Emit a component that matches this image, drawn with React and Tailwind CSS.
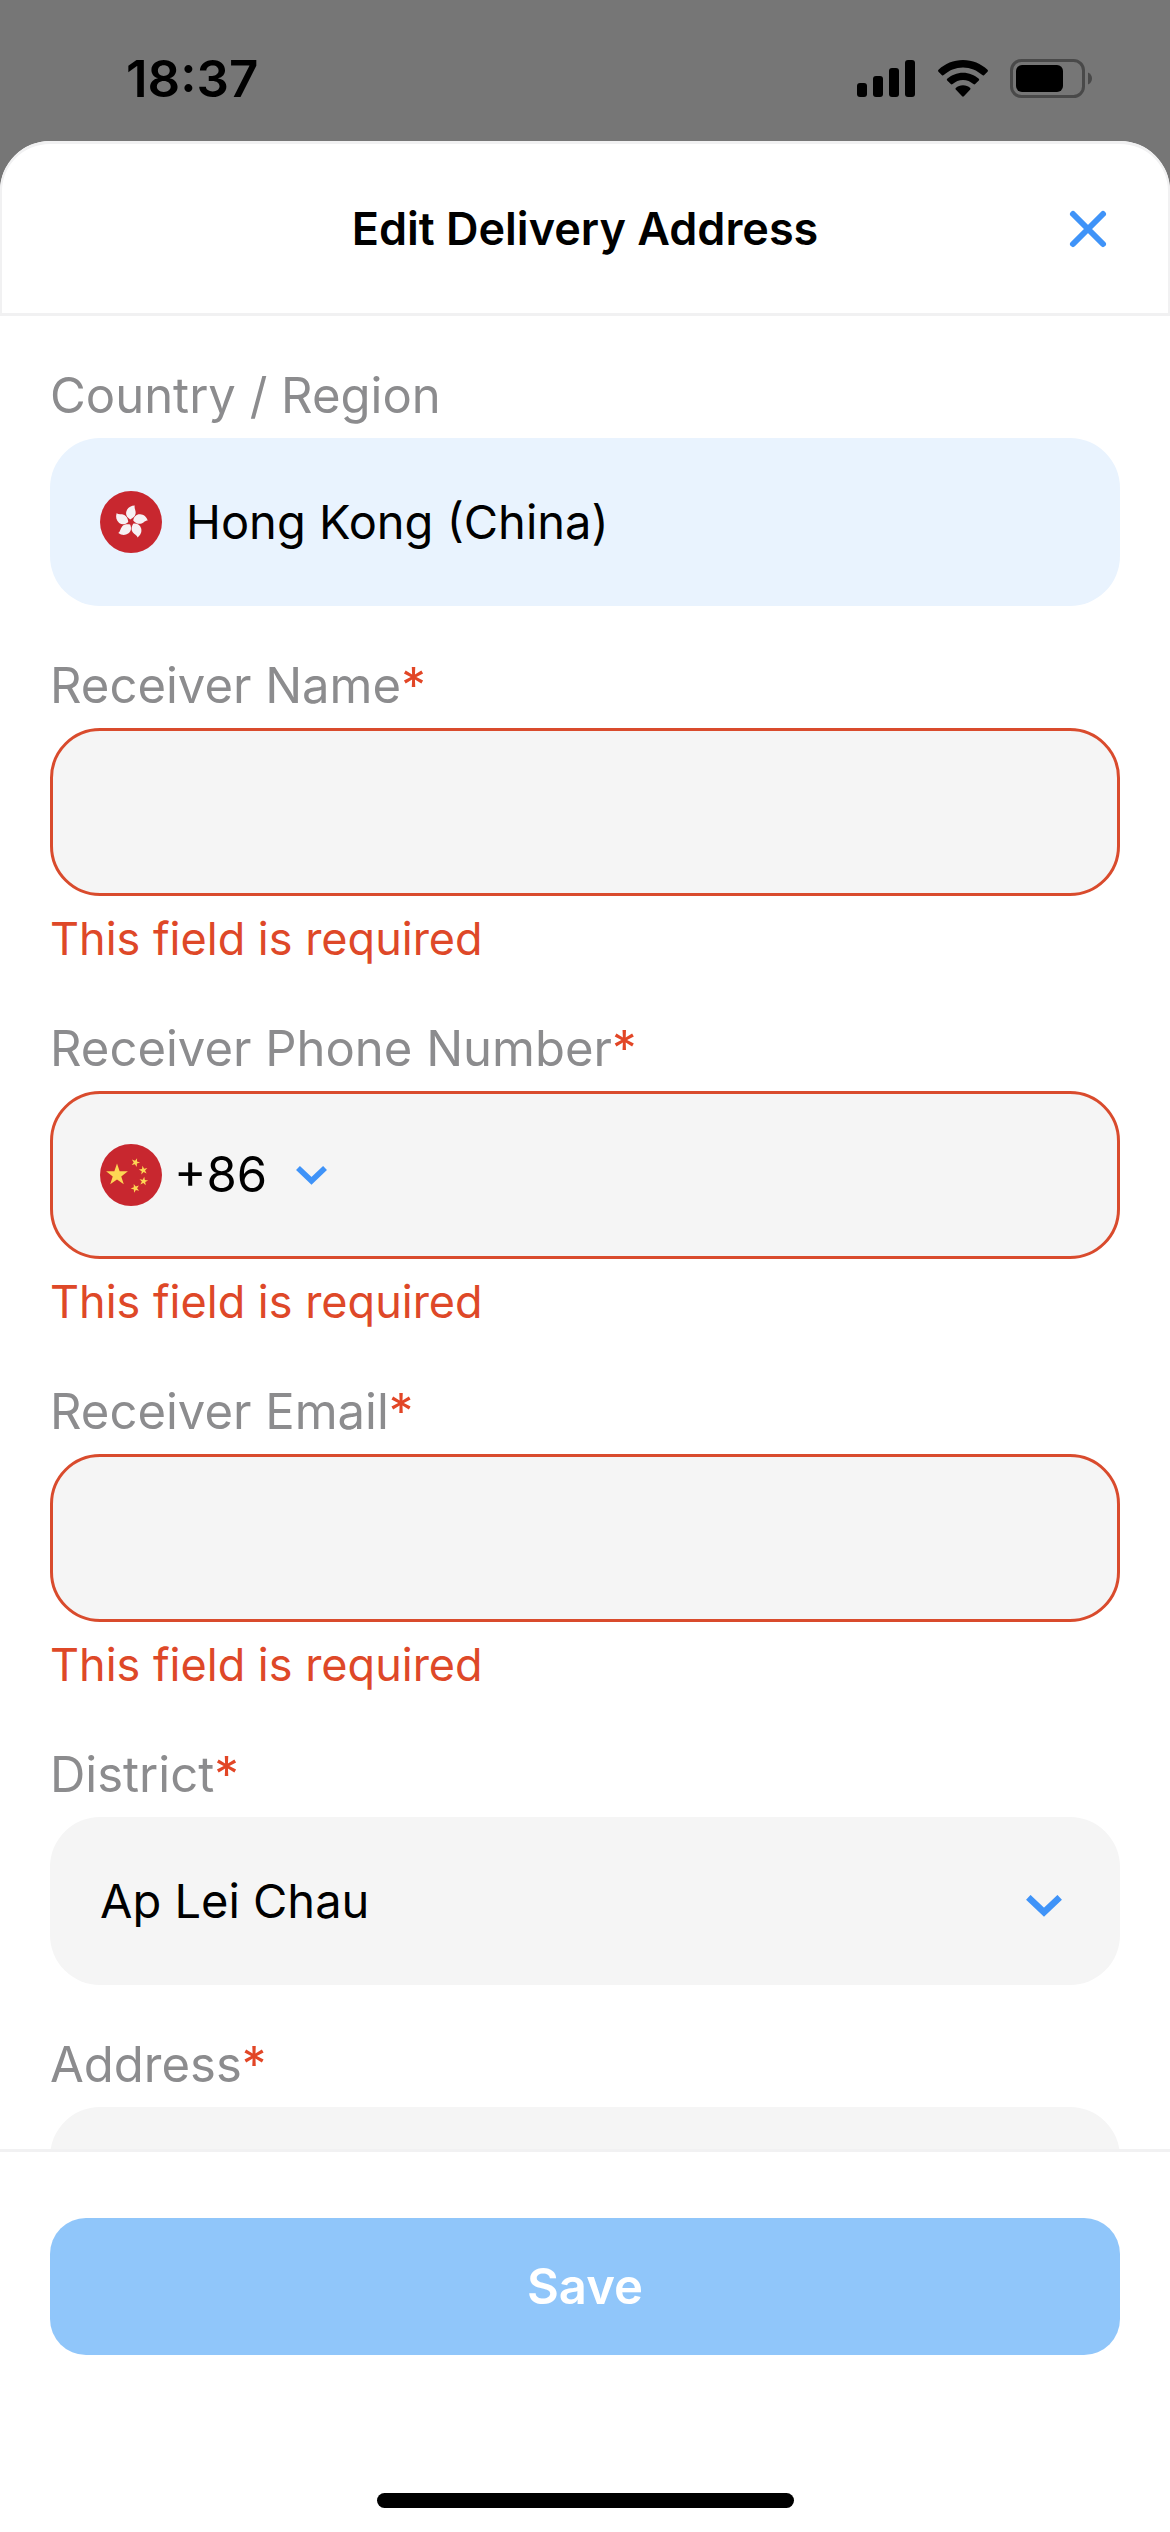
import React, { useState } from 'react';

const BOX = 'w-full h-[168px] rounded-[50px] text-[47px] text-black outline-none';

function StatusBar() {
  return (
    <div className="h-[141px] shrink-0 flex items-center justify-between pt-4 pl-[126px] pr-[77px]">
      <span className="text-[51px] leading-[60px] font-semibold">18:37</span>
      <div className="flex items-center gap-[22px]">
        <svg width="59" height="38" viewBox="0 0 59 38">
          <rect x="0" y="23" width="10" height="14" rx="3" />
          <rect x="16" y="16" width="10" height="21" rx="3" />
          <rect x="32" y="8" width="10" height="29" rx="3" />
          <rect x="48" y="0" width="10" height="37" rx="3" />
        </svg>
        <svg width="50" height="38" viewBox="0 0 50 38">
          <path d="M25 0C34.500 0 43 3.600 49.500 9.800Q50.400 10.800 49.500 11.700L46 15.200Q45.200 15.900 44.300 15.100C39 10.200 32.300 7.400 25 7.400S11 10.200 5.700 15.100Q4.800 15.900 4 15.200L.5 11.700Q-.4 10.800 .5 9.800C7 3.600 15.500 0 25 0Z" />
          <path d="M25 12.700C31 12.700 36.600 15 40.800 18.800Q41.700 19.700 40.800 20.600L37.200 24.100Q36.400 24.900 35.400 24.100C32.600 21.600 29 20 25 20S17.400 21.600 14.600 24.100Q13.600 24.900 12.800 24.100L9.200 20.600Q8.300 19.700 9.200 18.800C13.400 15 19 12.700 25 12.700Z" />
          <path d="M25 25.300C27.800 25.300 30.300 26.200 32.200 27.900Q33 28.700 32.200 29.600L25.900 36.300Q25 37.200 24.100 36.300L17.800 29.600Q17 28.700 17.800 27.900C19.700 26.200 22.200 25.300 25 25.300Z" />
        </svg>
        <svg width="83" height="39" viewBox="0 0 83 39">
          <rect x="1.500" y="1.500" width="72" height="36" rx="10" fill="none" stroke="#494949" strokeWidth="3" />
          <rect x="6" y="6" width="47" height="27" rx="6" />
          <path d="M78 13.500C80.700 14.500 82 17 82 19.500S80.700 24.500 78 25.500Z" fill="#494949" />
        </svg>
      </div>
    </div>
  );
}

function HongKongFlag() {
  return (
    <svg className="size-[62px] shrink-0" viewBox="0 0 62 62">
      <circle cx="31" cy="31" r="31" fill="#c8272f" />
      <g transform="translate(31 31)" fill="#f6f1f4">
        {[0, 72, 144, 216, 288].map((deg) => (
          <path key={deg} transform={`rotate(${deg})`} d="M-.8 -2.600C-4.200 -4.500 -5.800 -7.500 -4.500 -11C-3.200 -14.500 0 -16.300 3.800 -16.400C2.900 -13.800 5 -11.800 4.600 -8.500C4.200 -5.800 2 -3.800 -.8 -2.600Z" />
        ))}
      </g>
    </svg>
  );
}

const STAR = 'M0 -10L2.300 -3.200H9.500L3.700 1.200L5.900 8.100L0 3.900L-5.900 8.100L-3.700 1.200L-9.500 -3.200H-2.300Z';

function ChinaFlag() {
  return (
    <svg className="size-[62px] shrink-0" viewBox="0 0 62 62">
      <circle cx="31" cy="31" r="31" fill="#c8272f" />
      <g fill="#fdd654">
        <path transform="translate(17 31) scale(1.150)" d={STAR} />
        <path transform="translate(35.500 18.500) rotate(20) scale(.46)" d={STAR} />
        <path transform="translate(43.300 26.300) rotate(-10) scale(.46)" d={STAR} />
        <path transform="translate(43.600 37.300) rotate(8) scale(.46)" d={STAR} />
        <path transform="translate(35.300 44.300) rotate(-20) scale(.46)" d={STAR} />
      </g>
    </svg>
  );
}

function Chevron({ className }) {
  return (
    <svg className={className} viewBox="0 0 36 22" fill="none" stroke="#3f93f8" strokeWidth="6.500">
      <path d="M2.300 2.300L18 17.200L33.700 2.300" />
    </svg>
  );
}

function Field({ id, label, required, error, children }) {
  return (
    <div>
      <label htmlFor={id} className="block mb-3 text-[49px] leading-[60px] text-[#8c8c8e]">
        {label}
        {required && <span className="text-[#e24626]">*</span>}
      </label>
      {children}
      {error && <p className="mt-[13px] text-[45px] leading-[60px] text-[#de4828]">{error}</p>}
    </div>
  );
}

export default function App() {
  const [form, setForm] = useState({ name: '', phone: '', email: '', address: '' });
  const update = (key) => (e) => setForm({ ...form, [key]: e.target.value });

  const errorFor = (key) => (form[key] ? '' : 'This field is required');
  const borderFor = (key) => (form[key] ? 'border-transparent' : 'border-[#d94b2d]');

  return (
    <div className="h-screen flex flex-col overflow-hidden bg-[#767676] font-[Inter,sans-serif] text-black">
      <StatusBar />

      <div className="flex-1 min-h-0 flex flex-col bg-white rounded-t-[50px]">
        <header className="h-[175px] shrink-0 grid grid-cols-[1fr_auto_1fr] items-center px-[60px] rounded-t-[50px] border-x-2 border-y-3 border-[#f1f1f2]">
          <h1 className="col-start-2 text-[45px] leading-[60px] font-semibold">Edit Delivery Address</h1>
          <button type="button" aria-label="Close" className="justify-self-end">
            <svg width="40" height="40" viewBox="0 0 40 40" fill="none" stroke="#3f93f8" strokeWidth="6" strokeLinecap="round">
              <path d="M5 5L35 35M35 5L5 35" />
            </svg>
          </button>
        </header>

        <form id="address-form" className="flex-1 min-h-0 overflow-hidden flex flex-col gap-[50px] px-[50px] pt-[50px]">
          <Field id="country" label="Country / Region">
            <div className={`${BOX} flex items-center gap-6 px-[50px] bg-[#e9f3fe]`}>
              <HongKongFlag />
              <input id="country" readOnly value="Hong Kong (China)" className="flex-1 min-w-0 bg-transparent outline-none" />
            </div>
          </Field>

          <Field id="name" label="Receiver Name" required error={errorFor('name')}>
            <input id="name" value={form.name} onChange={update('name')} className={`${BOX} block px-[47px] border-3 bg-[#f5f5f5] ${borderFor('name')}`} />
          </Field>

          <Field id="phone" label="Receiver Phone Number" required error={errorFor('phone')}>
            <div className={`${BOX} flex items-center px-[47px] border-3 bg-[#f5f5f5] ${borderFor('phone')}`}>
              <ChinaFlag />
              <select aria-label="Country code" defaultValue="86" className="ml-3 text-[49px] appearance-none bg-transparent outline-none">
                <option value="86">+86</option>
              </select>
              <Chevron className="ml-7 w-[31px] h-[19px] shrink-0" />
              <input id="phone" type="tel" value={form.phone} onChange={update('phone')} className="ml-6 flex-1 min-w-0 bg-transparent outline-none" />
            </div>
          </Field>

          <Field id="email" label="Receiver Email" required error={errorFor('email')}>
            <input id="email" type="email" value={form.email} onChange={update('email')} className={`${BOX} block px-[47px] border-3 bg-[#f5f5f5] ${borderFor('email')}`} />
          </Field>

          <Field id="district" label="District" required>
            <div className="relative">
              <select id="district" defaultValue="ap-lei-chau" className={`${BOX} block px-[50px] appearance-none bg-[#f5f5f5]`}>
                <option value="ap-lei-chau">Ap Lei Chau</option>
              </select>
              <Chevron className="absolute right-[58px] top-[78px] w-9 h-[22px] pointer-events-none" />
            </div>
          </Field>

          <Field id="address" label="Address" required>
            <input id="address" value={form.address} onChange={update('address')} className={`${BOX} block px-[50px] bg-[#f5f5f5]`} />
          </Field>
        </form>

        <footer className="shrink-0 flex flex-col items-center px-[50px] pt-[66px] pb-6 border-t-3 border-[#f1f1f2]">
          <button type="submit" form="address-form" className="w-full h-[137px] rounded-[36px] bg-[#90c6fa] text-white text-[49px] font-semibold">
            Save
          </button>
          <div className="mt-[138px] w-[417px] h-[15px] rounded-full bg-black" />
        </footer>
      </div>
    </div>
  );
}
